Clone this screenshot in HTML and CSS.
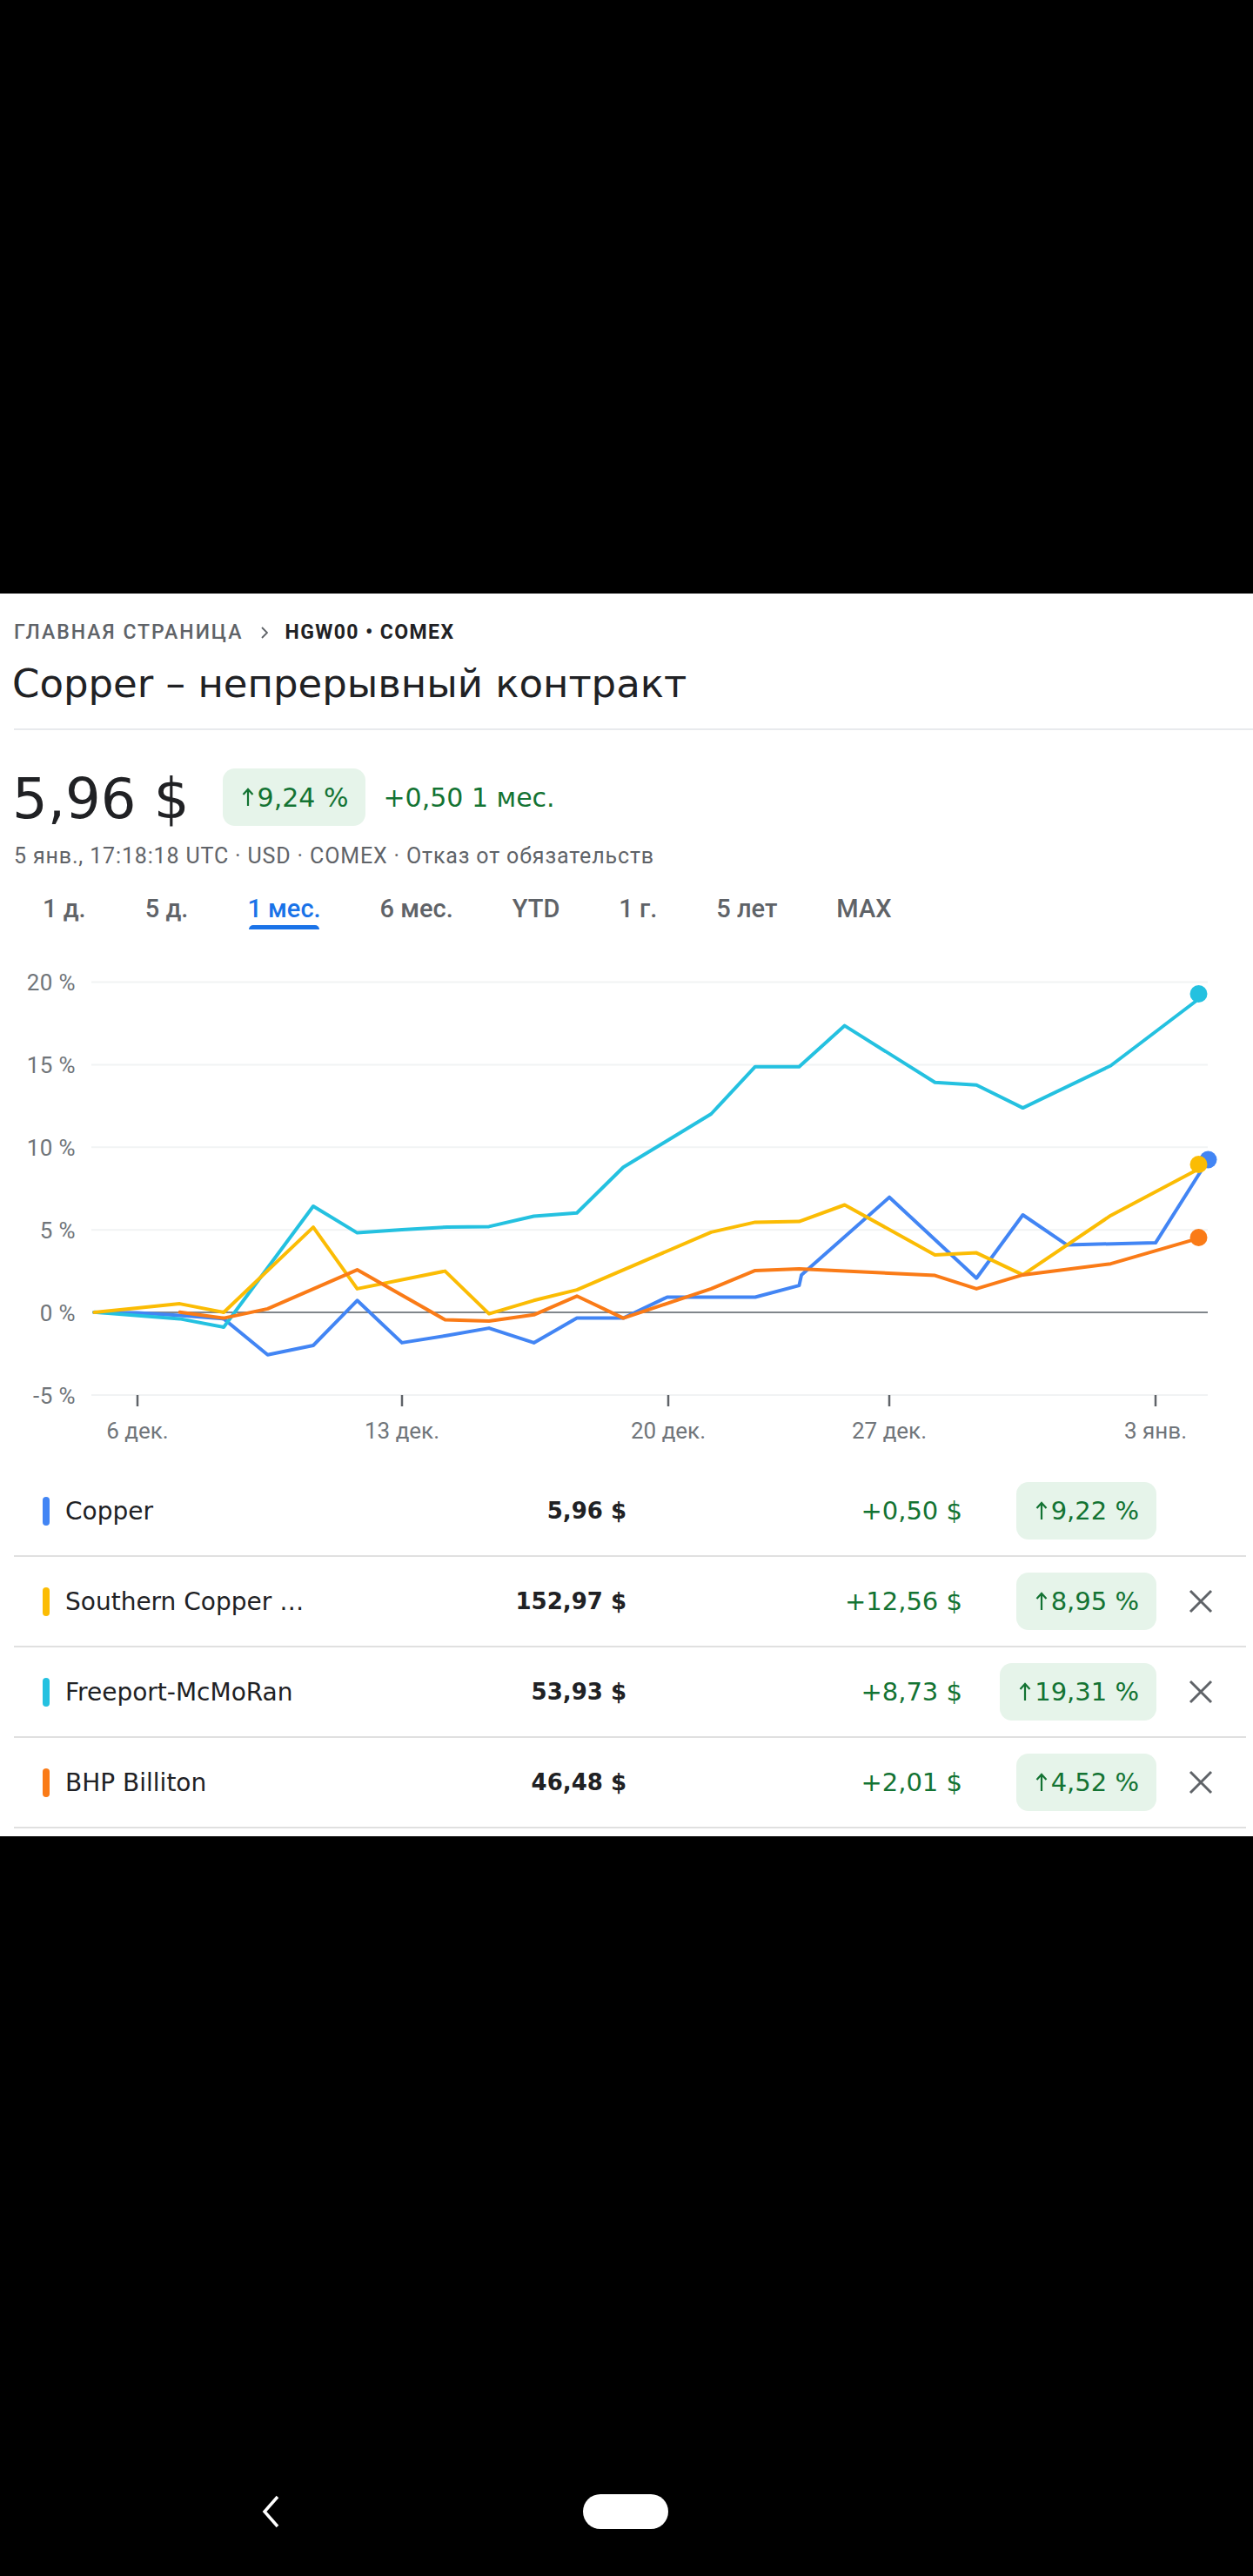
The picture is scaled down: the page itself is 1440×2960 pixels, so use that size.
FILE: index.html
```html
<!DOCTYPE html>
<html lang="ru">
<head>
<meta charset="utf-8">
<title>Copper – непрерывный контракт</title>
<link rel="stylesheet" href="styles.css">
</head>
<body>
<div class="screen">
  <div class="top-black"></div>
  <main class="page">
    <nav class="crumbs">
      <span class="crumb-home">ГЛАВНАЯ СТРАНИЦА</span>
      <svg class="crumb-chev" viewBox="0 0 8 14" width="8" height="14"><polyline points="1,1 7,7 1,13" fill="none" stroke="#5f6368" stroke-width="1.8"/></svg>
      <span class="crumb-cur">HGW00 • COMEX</span>
    </nav>
    <h1 class="title">Copper – непрерывный контракт</h1>
    <div class="divider"></div>
    <div class="price-row">
      <span class="price">5,96&nbsp;$</span>
      <span class="chip chip-lg"><svg class="arrow" viewBox="0 0 14 22" width="14" height="22"><path d="M7 21V2M1.5 8L7 2l5.5 6" fill="none" stroke="#137333" stroke-width="2.2"/></svg>9,24&nbsp;%</span>
      <span class="change">+0,50 1 мес.</span>
    </div>
    <div class="meta">5 янв., 17:18:18 UTC · USD · COMEX · Отказ от обязательств</div>
    <div class="tabs">
      <span class="tab">1 д.</span>
      <span class="tab">5 д.</span>
      <span class="tab active">1 мес.</span>
      <span class="tab">6 мес.</span>
      <span class="tab">YTD</span>
      <span class="tab">1 г.</span>
      <span class="tab">5 лет</span>
      <span class="tab">MAX</span>
    </div>
    <svg class="chart" viewBox="0 1090 1440 595" width="1440" height="595">
      <g class="grid">
        <line x1="105" y1="1128.6" x2="1388" y2="1128.6"/>
        <line x1="105" y1="1223.5" x2="1388" y2="1223.5"/>
        <line x1="105" y1="1318.3" x2="1388" y2="1318.3"/>
        <line x1="105" y1="1413.2" x2="1388" y2="1413.2"/>
        <line x1="105" y1="1602.9" x2="1388" y2="1602.9"/>
      </g>
      <line class="zero" x1="108" y1="1508" x2="1388" y2="1508"/>
      <g class="ylabels">
        <text x="87" y="1138">20 %</text>
        <text x="87" y="1233">15 %</text>
        <text x="87" y="1328">10 %</text>
        <text x="87" y="1422.5">5 %</text>
        <text x="87" y="1517.5">0 %</text>
        <text x="87" y="1612.5">-5 %</text>
      </g>
      <g class="ticks">
        <line x1="158" y1="1603" x2="158" y2="1616"/>
        <line x1="462" y1="1603" x2="462" y2="1616"/>
        <line x1="768" y1="1603" x2="768" y2="1616"/>
        <line x1="1022" y1="1603" x2="1022" y2="1616"/>
        <line x1="1328" y1="1603" x2="1328" y2="1616"/>
      </g>
      <g class="xlabels">
        <text x="158" y="1653">6 дек.</text>
        <text x="462" y="1653">13 дек.</text>
        <text x="768" y="1653">20 дек.</text>
        <text x="1022" y="1653">27 дек.</text>
        <text x="1328" y="1653">3 янв.</text>
      </g>
      <polyline class="ln ln-blue" points="108,1508 158,1508.5 206.6,1511.5 257.1,1515.4 307.6,1556.7 360,1546 410.5,1494.3 461.9,1542.9 514.3,1534.5 562,1526.1 613.5,1542.9 663,1514.6 716.3,1514.6 766.8,1490.5 867.9,1490.5 918.4,1477.1 921.1,1464.9 1022.1,1375.7 1122.2,1468.7 1175.5,1396 1226,1430.4 1328,1428.1 1388.5,1332.5"/>
      <polyline class="ln ln-cyan" points="108.4,1507.7 206.6,1515.4 257.1,1525 360,1386 410.5,1416.6 461.9,1413 514.3,1410 562,1409.4 613.5,1397.5 663,1393.7 716.3,1341.3 817.3,1280 867.9,1225.7 918.4,1225.7 970.7,1178.6 1074.5,1243.7 1122.2,1246.7 1175.5,1273.1 1276.5,1224.5 1377.5,1148"/>
      <polyline class="ln ln-yellow" points="108.4,1508 158,1503 206.6,1498.1 257.1,1508 360,1410.1 410.5,1480.9 511.5,1460.6 562,1509.6 613.5,1494.3 663,1482.1 817.3,1415.9 867.9,1404.4 918.4,1403.6 970.7,1384.5 1074.5,1441.9 1122.2,1439.6 1175.5,1464.9 1276.5,1396.7 1377.5,1343.2"/>
      <polyline class="ln ln-orange" points="206.6,1507.7 257.1,1514.6 307.6,1503.9 410.5,1459.1 511.5,1516.5 562,1518 613.5,1510.8 663,1489.3 716.3,1514.6 817.3,1480.9 867.9,1459.9 918.4,1458 1074.5,1465.6 1122.2,1480.9 1175.5,1464.9 1276.5,1452.2 1377.5,1422.8"/>
      <circle class="dot-blue" cx="1388.5" cy="1332.5" r="10"/>
      <circle class="dot-cyan" cx="1377.5" cy="1142" r="10"/>
      <circle class="dot-yellow" cx="1377.5" cy="1338" r="10"/>
      <circle class="dot-orange" cx="1377.5" cy="1422" r="10"/>
    </svg>
    <div class="rows">
      <div class="row">
        <span class="swatch sw-blue"></span>
        <span class="name">Copper</span>
        <span class="val">5,96&nbsp;$</span>
        <span class="chg">+0,50&nbsp;$</span>
        <span class="chip-cell"><span class="chip"><svg class="arrow" viewBox="0 0 14 22" width="14" height="22"><path d="M7 21V2M1.5 8L7 2l5.5 6" fill="none" stroke="#137333" stroke-width="2.2"/></svg>9,22&nbsp;%</span></span>
        <span class="x-cell"></span>
      </div>
      <div class="row">
        <span class="swatch sw-yellow"></span>
        <span class="name">Southern Copper …</span>
        <span class="val">152,97&nbsp;$</span>
        <span class="chg">+12,56&nbsp;$</span>
        <span class="chip-cell"><span class="chip"><svg class="arrow" viewBox="0 0 14 22" width="14" height="22"><path d="M7 21V2M1.5 8L7 2l5.5 6" fill="none" stroke="#137333" stroke-width="2.2"/></svg>8,95&nbsp;%</span></span>
        <span class="x-cell"><svg class="x-icon" viewBox="0 0 30 30" width="30" height="30"><path d="M3 3L27 27M27 3L3 27" stroke="#5f6368" stroke-width="3" fill="none"/></svg></span>
      </div>
      <div class="row">
        <span class="swatch sw-cyan"></span>
        <span class="name">Freeport-McMoRan</span>
        <span class="val">53,93&nbsp;$</span>
        <span class="chg">+8,73&nbsp;$</span>
        <span class="chip-cell"><span class="chip"><svg class="arrow" viewBox="0 0 14 22" width="14" height="22"><path d="M7 21V2M1.5 8L7 2l5.5 6" fill="none" stroke="#137333" stroke-width="2.2"/></svg>19,31&nbsp;%</span></span>
        <span class="x-cell"><svg class="x-icon" viewBox="0 0 30 30" width="30" height="30"><path d="M3 3L27 27M27 3L3 27" stroke="#5f6368" stroke-width="3" fill="none"/></svg></span>
      </div>
      <div class="row">
        <span class="swatch sw-orange"></span>
        <span class="name">BHP Billiton</span>
        <span class="val">46,48&nbsp;$</span>
        <span class="chg">+2,01&nbsp;$</span>
        <span class="chip-cell"><span class="chip"><svg class="arrow" viewBox="0 0 14 22" width="14" height="22"><path d="M7 21V2M1.5 8L7 2l5.5 6" fill="none" stroke="#137333" stroke-width="2.2"/></svg>4,52&nbsp;%</span></span>
        <span class="x-cell"><svg class="x-icon" viewBox="0 0 30 30" width="30" height="30"><path d="M3 3L27 27M27 3L3 27" stroke="#5f6368" stroke-width="3" fill="none"/></svg></span>
      </div>
    </div>
  </main>
  <div class="bottom-black">
    <div class="navbar">
      <svg class="nav-back" viewBox="0 0 22 40" width="22" height="40"><polyline points="19,3 4,20 19,37" fill="none" stroke="#ffffff" stroke-width="3.5"/></svg>
      <span class="nav-home"></span>
    </div>
  </div>
</div>
</body>
</html>
```

FILE: styles.css
```css
* { box-sizing: border-box; }
html, body { margin: 0; padding: 0; background: #000; }
body { font-family: Roboto, "Liberation Sans", sans-serif; color: #202124; }

.screen { width: 1440px; }
.top-black { height: 682px; background: #000; }

.page {
  background: #fff;
  padding: 30px 0 9px 0;
}

.crumbs {
  display: flex;
  align-items: center;
  height: 30px;
  margin-left: 16px;
  font-family: Roboto, sans-serif;
  font-size: 23px;
  font-weight: 500;
  letter-spacing: 2px;
  line-height: 30px;
}
.crumb-home { color: #5f6368; }
.crumb-chev { margin: 0 20px 0 20px; display: block; }
.crumb-cur { color: #202124; font-weight: 700; letter-spacing: 1.4px; }

.title {
  margin: 16px 0 0 14px;
  font-family: "DejaVu Sans", sans-serif;
  font-weight: 400;
  font-size: 45px;
  line-height: 56px;
  color: #202124;
}

.divider {
  margin: 23px 0 0 16px;
  height: 2px;
  background: #e8eaed;
}

.price-row {
  display: flex;
  align-items: center;
  height: 66px;
  margin: 44px 0 0 14px;
  font-family: "DejaVu Sans", sans-serif;
}
.price {
  font-size: 64px;
  line-height: 66px;
  color: #202124;
  padding-top: 4px;
  margin-right: 38px;
}
.chip {
  display: inline-flex;
  align-items: center;
  height: 66px;
  padding: 0 20px 0 22px;
  border-radius: 14px;
  background: #e6f4ea;
  color: #137333;
  font-family: "DejaVu Sans", sans-serif;
  font-size: 29px;
  white-space: nowrap;
}
.chip .arrow { display: block; margin-right: 4px; }
.chip-lg { font-size: 30px; padding: 0 20px 0 22px; }
.change {
  margin-left: 20px;
  font-size: 30px;
  color: #137333;
}

.meta {
  margin: 19px 0 0 16px;
  font-family: Roboto, sans-serif;
  font-size: 25px;
  line-height: 32px;
  letter-spacing: 0.85px;
  color: #5f6368;
  white-space: nowrap;
}

.tabs {
  display: flex;
  gap: 68px;
  margin: 26px 0 0 49px;
  font-family: Roboto, sans-serif;
  font-weight: 500;
  font-size: 29px;
  line-height: 36px;
  color: #5f6368;
}
.tab {
  display: flex;
  flex-direction: column;
  align-items: stretch;
  white-space: nowrap;
}
.tab::after {
  content: "";
  display: block;
  height: 5px;
  margin: 1px 2px 0 2px;
  border-radius: 5px 5px 0 0;
  background: transparent;
}
.tab.active { color: #1a73e8; }
.tab.active::after { background: #1a73e8; }

.chart {
  display: block;
  margin-top: 22px;
}
.grid line { stroke: #f1f3f4; stroke-width: 2; }
.zero { stroke: #80868b; stroke-width: 2; }
.ticks line { stroke: #5f6368; stroke-width: 2.5; }
.ylabels text {
  font-family: Roboto, sans-serif;
  font-size: 26px;
  letter-spacing: 0.4px;
  fill: #70757a;
  text-anchor: end;
}
.xlabels text {
  font-family: Roboto, sans-serif;
  font-size: 26px;
  fill: #70757a;
  text-anchor: middle;
}
.ln { fill: none; stroke-width: 4; stroke-linejoin: round; stroke-linecap: round; }
.ln-blue { stroke: #4285f4; }
.ln-cyan { stroke: #24c1e0; }
.ln-yellow { stroke: #fbbc04; }
.ln-orange { stroke: #fa7b17; }
.dot-blue { fill: #4285f4; }
.dot-cyan { fill: #24c1e0; }
.dot-yellow { fill: #fbbc04; }
.dot-orange { fill: #fa7b17; }

.rows { display: flex; flex-direction: column; }
.row {
  display: grid;
  grid-template-columns: 8px 300px 363px 386px 223px 1fr;
  align-items: center;
  height: 104px;
  margin: 0 8px 0 16px;
  padding-left: 33px;
  border-bottom: 2px solid #e0e0e0;
  font-family: "DejaVu Sans", sans-serif;
}
.swatch {
  display: block;
  width: 8px;
  height: 33px;
  border-radius: 4px;
}
.sw-blue { background: #4285f4; }
.sw-yellow { background: #fbbc04; }
.sw-cyan { background: #24c1e0; }
.sw-orange { background: #fa7b17; }
.name {
  padding-left: 18px;
  font-size: 28px;
  color: #202124;
  white-space: nowrap;
}
.val {
  text-align: right;
  font-size: 26px;
  font-weight: 700;
  color: #202124;
  white-space: nowrap;
}
.chg {
  text-align: right;
  font-size: 29px;
  color: #137333;
  white-space: nowrap;
}
.chip-cell { display: flex; justify-content: flex-end; }
.x-cell { display: flex; align-items: center; padding-left: 36px; }
.x-icon { display: block; }

.bottom-black {
  height: 850px;
  padding-top: 756px;
  background: #000;
}
.navbar {
  display: flex;
  align-items: center;
  height: 40px;
  padding-left: 300px;
}
.nav-back { display: block; }
.nav-home {
  display: block;
  width: 98px;
  height: 40px;
  margin-left: 348px;
  border-radius: 20px;
  background: #fff;
}
```
